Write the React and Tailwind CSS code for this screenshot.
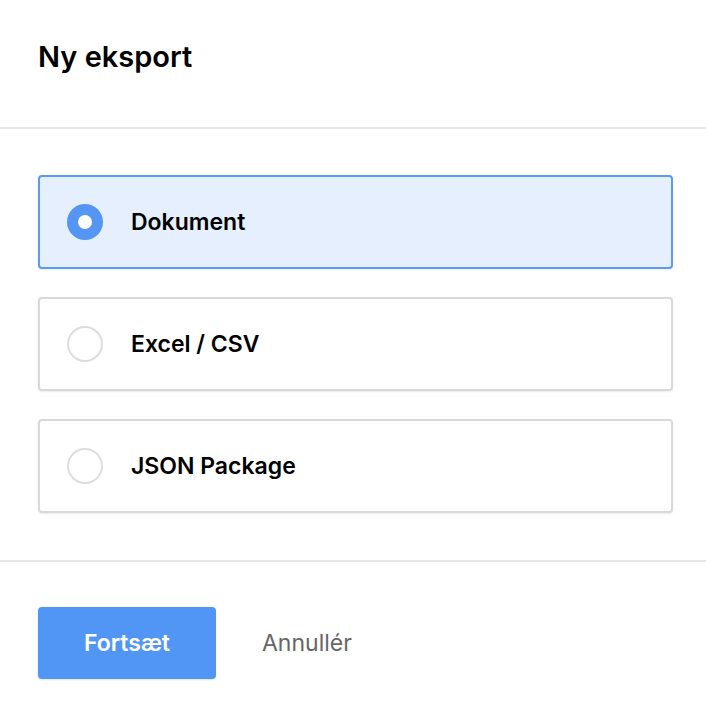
import React, { useState } from "react";

const options = [
  { id: "doc", label: "Dokument" },
  { id: "csv", label: "Excel / CSV" },
  { id: "json", label: "JSON Package" },
];

function Radio({ checked }) {
  if (checked) {
    return (
      <span className="flex h-[36px] w-[36px] shrink-0 items-center justify-center rounded-full bg-[#5596f4]">
        <span className="h-[14px] w-[14px] rounded-full bg-white" />
      </span>
    );
  }
  return <span className="h-[36px] w-[36px] shrink-0 rounded-full border-2 border-[#dedede] bg-white" />;
}

export default function App() {
  const [selected, setSelected] = useState("doc");

  return (
    <div className="min-h-screen bg-white text-black" style={{ fontFamily: '"Inter", "Liberation Sans", sans-serif' }}>
      <div className="flex h-[127px] items-center pb-[14px] pl-[38px] pr-[33px]">
        <h1 className="text-[29px] font-semibold leading-none">Ny eksport</h1>
      </div>
      <div className="h-[2px] bg-[#e6e6e6]" />

      <div className="flex flex-col gap-[28px] pl-[38px] pr-[33px] pt-[46px] pb-[47px]">
        {options.map((o) => {
          const checked = selected === o.id;
          return (
            <button
              key={o.id}
              onClick={() => setSelected(o.id)}
              className={
                checked
                  ? "flex h-[94px] items-center gap-[28px] rounded-[4px] border-2 border-[#5a9bf5] bg-[#e6effd] pl-[27px] text-left shadow-[0_1px_2px_rgba(0,0,0,0.08)]"
                  : "flex h-[94px] items-center gap-[28px] rounded-[4px] border-2 border-[#d9d9d9] bg-white pl-[27px] text-left shadow-[0_1px_2px_rgba(0,0,0,0.08)]"
              }
            >
              <Radio checked={checked} />
              <span className="text-[23px] font-semibold leading-none">{o.label}</span>
            </button>
          );
        })}
      </div>

      <div className="h-[2px] bg-[#e6e6e6]" />

      <div className="flex items-center gap-[46px] pl-[38px] pr-[33px] pt-[45px]">
        <button className="h-[72px] w-[178px] rounded-[4px] bg-[#5296f5] text-[23px] font-semibold leading-none text-white shadow-[0_1px_2px_rgba(0,0,0,0.12)]">
          Fortsæt
        </button>
        <button className="text-[23px] leading-none text-[#666666]">Annullér</button>
      </div>
    </div>
  );
}
